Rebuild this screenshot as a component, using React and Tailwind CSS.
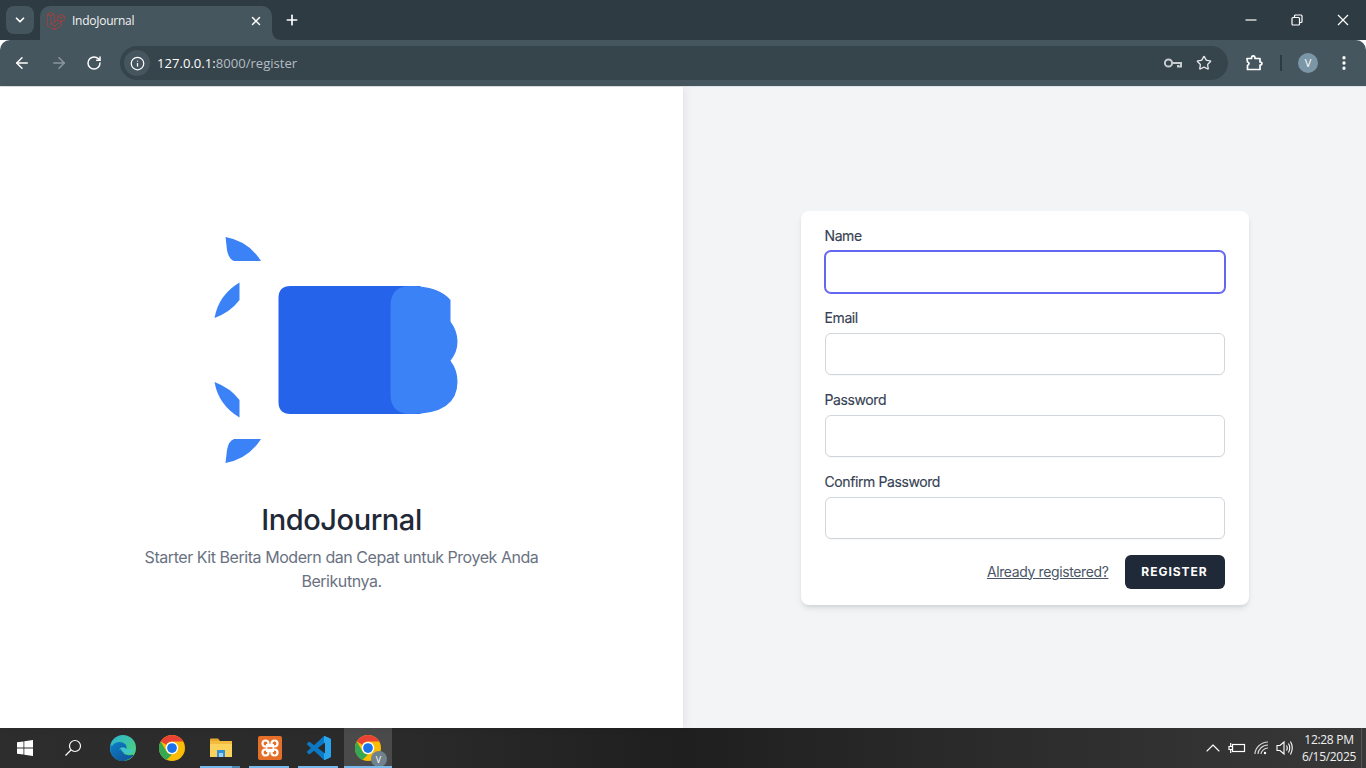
import React from "react";
import { ChevronDown, X, Plus, ArrowLeft, ArrowRight, RotateCw, Info, Star, MoreVertical, ChevronUp } from "lucide-react";
import { FaLaravel } from "react-icons/fa";

function Logo() {
  return (
    <svg width="270" height="250" viewBox="206.5 225 270 250">
      <path fill="#3b82f6" d="M225 237Q248 241 260.5 261H233.5Q228 259 226.5 250Z" />
      <path fill="#3b82f6" d="M239 282.5Q218 295 214 318Q230 312 239 300Z" />
      <path fill="#3b82f6" d="M239 417.5Q218 405 214 382Q230 388 239 400Z" />
      <path fill="#3b82f6" d="M225 463Q248 459 260.5 439H233.5Q228 441 226.5 450Z" />
      <path fill="#2563eb" d="M290 286H420V414H290Q278 414 278 402V298Q278 286 290 286Z" />
      <path fill="#3b82f6" d="M410 286Q438 286 450 300V321.5Q457 331 457 341.5Q457 352 450 360.7Q457 370 457 381.7Q457 414 410 414Q390 414 390 394V306Q390 286 410 286Z" />
    </svg>
  );
}

function Field({ label, focused }) {
  return (
    <div className="flex flex-col">
      <label className="-mt-px h-[21px] text-sm font-normal leading-5 tracking-[-0.4px] text-gray-700 [-webkit-text-stroke:0.15px_#374151]">{label}</label>
      <div
        className={
          focused
            ? "mt-1 h-[42px] rounded-md border border-[#6366f1] bg-white ring-1 ring-[#6366f1]"
            : "mt-1 h-[42px] rounded-md border border-gray-300 bg-white shadow-[0_1px_1px_rgba(0,0,0,0.03)]"
        }
      />
    </div>
  );
}

function TaskButton({ children, underline, active, split }) {
  return (
    <div className={"relative flex h-full items-center justify-center " + (active ? "w-[48px] bg-[#4a4a4a]" : "w-[49px]")}>
      {children}
      {underline && <div className={"absolute bottom-0 h-0.5 bg-[#76b9ed] " + (active ? "left-0 right-0" : "left-[3.5px] right-[5.5px]")} />}
      {split && <div className="absolute bottom-0 right-[5.5px] h-0.5 w-[8px] bg-[#4d87ad]" />}
    </div>
  );
}

function ChromeIcon({ size = 26 }) {
  return (
    <svg width={size} height={size} viewBox="0 0 48 48">
      <circle cx="24" cy="24" r="24" fill="#fbbc04" />
      <path fill="#ea4335" d="M24 0A24 24 0 0 1 44.8 12H24A12 12 0 0 0 13.6 18L3.2 12A24 24 0 0 1 24 0Z" />
      <path fill="#34a853" d="M3.2 12L13.6 30A12 12 0 0 0 24 36L13.6 46A24 24 0 0 1 3.2 12Z" />
      <circle cx="24" cy="24" r="11.5" fill="#fff" />
      <circle cx="24" cy="24" r="9" fill="#1a73e8" />
    </svg>
  );
}

const vs = "M23.15 2.587L18.21.21a1.494 1.494 0 0 0-1.705.29l-9.46 8.63-4.12-3.128a.999.999 0 0 0-1.276.057L.327 7.261A1 1 0 0 0 .326 8.74L3.899 12 .326 15.26a1 1 0 0 0 .001 1.479L1.65 17.94a.999.999 0 0 0 1.276.057l4.12-3.128 9.46 8.63a1.492 1.492 0 0 0 1.704.29l4.942-2.377A1.5 1.5 0 0 0 24 20.06V3.939a1.5 1.5 0 0 0-.85-1.352zm-5.146 14.861L10.826 12l7.178-5.448v10.896z";

export default function App() {
  return (
    <div className="flex h-screen w-full flex-col overflow-hidden bg-white font-['Inter',sans-serif]">
      {/* tab strip */}
      <div className="flex h-10 shrink-0 items-end bg-[#2f3b42]">
        <div className="mb-1.5 ml-1.5 flex h-7 w-7 items-center justify-center rounded-lg bg-[#44555e]">
          <ChevronDown size={14} strokeWidth={3} className="text-white" />
        </div>
        <div className="relative ml-1.5 flex h-[34px] w-[232px] items-center rounded-t-[10px] bg-[#46565f] pl-[7px] pr-[9px] pb-1">
          <FaLaravel size={18} className="shrink-0 text-[#c63a31]" />
          <span className="ml-[7px] flex-1 font-['Open_Sans',sans-serif] text-xs tracking-[-0.25px] text-[#f1f3f4]">IndoJournal</span>
          <X size={14} strokeWidth={2.5} className="text-white" />
          <svg className="absolute bottom-0 -right-2.5" width="10" height="10" viewBox="0 0 10 10"><path fill="#46565f" d="M0 0Q0 10 10 10H0Z" /></svg>
        </div>
        <div className="mb-[12px] ml-[12px] flex w-4 items-center justify-center">
          <Plus size={16} strokeWidth={2.5} className="text-white" />
        </div>
        <div className="flex-1" />
        <div className="mb-[13px] flex items-center gap-[32px] pr-[16px]">
          <svg width="14" height="14" viewBox="0 0 14 14" fill="none" stroke="#fff" strokeWidth="1.2"><path d="M1.5 7H12.5" /></svg>
          <svg width="14" height="14" viewBox="0 0 14 14" fill="none" stroke="#fff" strokeWidth="1.2">
            <rect x="2" y="4.5" width="7.5" height="7.5" rx="1" />
            <path d="M4.5 4.5V3a1 1 0 0 1 1-1H11a1 1 0 0 1 1 1v5.5a1 1 0 0 1-1 1H9.5" />
          </svg>
          <svg width="14" height="14" viewBox="0 0 14 14" fill="none" stroke="#fff" strokeWidth="1.2"><path d="M2 2L12 12M12 2L2 12" /></svg>
        </div>
      </div>
      {/* toolbar */}
      <div className="flex h-[46px] shrink-0 items-center rounded-t-[10px] bg-[#46565f] pr-[13px] text-white">
        <div className="flex w-[120px] items-center justify-between pl-[13px] pr-[18px]">
          <ArrowLeft size={18} strokeWidth={2} />
          <ArrowRight size={18} strokeWidth={2} className="text-[#8b979d]" />
          <RotateCw size={16} strokeWidth={2.2} />
        </div>
        <div className="flex h-[34px] flex-1 items-center rounded-full bg-[#36444c] pl-1 pr-3">
          <div className="flex h-[26px] w-[26px] items-center justify-center rounded-full bg-[#46565f]">
            <Info size={15} strokeWidth={2} />
          </div>
          <span className="ml-[7px] flex-1 pt-0.5 font-['Open_Sans',sans-serif] text-[13.1px] text-[#b4bdc2]">
            <span className="text-white">127.0.0.1:</span>8000/register
          </span>
          <svg width="20" height="14" viewBox="0 0 20 14" fill="none" stroke="#c6cccf" strokeWidth="2">
            <circle cx="5.5" cy="7" r="3.6" />
            <path d="M9.5 7h8.5v3.5h-3V9" />
          </svg>
          <Star size={16} strokeWidth={2} className="ml-[13px] mr-[4px] text-[#e3e6e8]" />
        </div>
        <svg className="ml-[17px]" width="18" height="18" viewBox="0 0 18 18" fill="none" stroke="#fff" strokeWidth="1.7">
          <path d="M2 4.5H6.5C6.5 1 10 1 10 4.5H15V8C17.5 8 17.5 11 15 11V15.5H2.5V11.5C4.5 10.5 4.5 8.5 2.5 8Z" strokeLinejoin="round" />
        </svg>
        <div className="ml-[17px] h-4 w-0.5 bg-[#2f3b42]" />
        <div className="ml-[16px] flex h-5 w-5 items-center justify-center rounded-full bg-[#7b96a6] font-['Open_Sans',sans-serif] text-[11px] text-white">V</div>
        <MoreVertical size={18} strokeWidth={2.4} className="ml-[17px]" />
      </div>
      <div className="h-px shrink-0 bg-[#dfe3e6]" />
      {/* main */}
      <div className="flex min-h-0 flex-1">
        <div className="z-10 flex w-[683px] shrink-0 flex-col items-center justify-center bg-white pt-[2px] shadow-[2px_0_8px_rgba(0,0,0,0.07)]">
          <Logo />
          <h1 className="mt-[27px] text-[29px] font-medium leading-9 tracking-[-0.42px] text-[#1f2937]">IndoJournal</h1>
          <p className="mt-[7px] text-center text-base leading-6 tracking-[-0.45px] text-gray-500">
            Starter Kit Berita Modern dan Cepat untuk Proyek Anda<br />Berikutnya.
          </p>
        </div>
        <div className="flex flex-1 items-center justify-center bg-[#f3f4f6]">
          <div className="flex w-[448px] flex-col gap-4 rounded-lg bg-white px-6 py-4 shadow-md">
            <Field label="Name" focused />
            <Field label="Email" />
            <Field label="Password" />
            <Field label="Confirm Password" />
            <div className="flex items-center justify-end">
              <span className="text-sm tracking-[-0.38px] text-gray-600 underline">Already registered?</span>
              <div className="ml-4 flex h-[34px] w-[100px] items-center justify-center rounded-md bg-[#1f2937] text-xs font-bold tracking-[0.08em] text-white">REGISTER</div>
            </div>
          </div>
        </div>
      </div>
      {/* taskbar */}
      <div className="flex h-10 shrink-0 items-center bg-[linear-gradient(90deg,#2d2d2d_0%,#2a2a2a_30%,#1f1f1f_50%,#2a2a2a_70%,#383838_100%)] font-['Open_Sans',sans-serif] text-white">
        <div className="flex h-full w-[49px] items-center justify-center">
          <svg width="16" height="16" viewBox="0 0 16 16" fill="#fff"><path d="M0 2.3L6.5 1.4V7.6H0ZM7.3 1.3L16 0V7.6H7.3ZM0 8.4H6.5V14.6L0 13.7ZM7.3 8.4H16V16L7.3 14.7Z" /></svg>
        </div>
        <div className="flex h-full w-[49.5px] items-center justify-center">
          <svg className="-ml-0.5" width="18" height="18" viewBox="0 0 18 18" fill="none" stroke="#fff" strokeWidth="1.2">
            <circle cx="11" cy="7" r="5.5" />
            <path d="M7 11L1.5 16.5" />
          </svg>
        </div>
        <TaskButton>
          <svg width="26" height="26" viewBox="0 0 26 26">
            <defs>
              <linearGradient id="edgeA" x1="0" y1="0" x2="1" y2="1"><stop offset="0" stopColor="#2bb3d8" /><stop offset="1" stopColor="#52d66a" /></linearGradient>
              <linearGradient id="edgeB" x1="0" y1="0" x2="1" y2="1"><stop offset="0" stopColor="#0c7fc6" /><stop offset="1" stopColor="#124f95" /></linearGradient>
            </defs>
            <circle cx="13" cy="13" r="13" fill="url(#edgeA)" />
            <path fill="url(#edgeB)" d="M1 9C3 16 8 25 17 25.5C12 26.8 4 26 1 18C0 15 0 12 1 9Z" />
            <path fill="url(#edgeB)" d="M1 14C2 7 11 5 15 9C18 12 16 15 14 16C12 18 15 21 21 20C24 19.5 24 20.5 22 22C18 26 11 26.5 6 22C2 19 1 16 1 14Z" />
            <path fill="#3fc5cb" d="M9 15C11 11 16 12 16 14.5H23C24 17 20 19 17 18.5C13 18 11 16 11 14Z" />
          </svg>
        </TaskButton>
        <TaskButton><ChromeIcon /></TaskButton>
        <TaskButton underline split>
          <svg width="22" height="20" viewBox="0 0 22 20">
            <path fill="#e9a92c" d="M0 1.5A1 1 0 0 1 1 .5H8L10 3H0Z" />
            <rect y="3" width="22" height="16" fill="#fbd35c" />
            <rect y="3" width="22" height="3" fill="#f3bc3e" />
            <path fill="#2f8fd8" d="M7 12H15V19H13V15H9V19H7Z" />
            <rect x="9" y="15" width="4" height="4" fill="#9fd2f2" />
          </svg>
        </TaskButton>
        <TaskButton underline>
          <svg width="24" height="24" viewBox="0 0 24 24" fill="none">
            <rect width="24" height="24" rx="2" fill="#e56f28" />
            <g stroke="#fff" strokeWidth="2.2">
              <circle cx="7.5" cy="7.5" r="3" />
              <circle cx="16.5" cy="7.5" r="3" />
              <circle cx="7.5" cy="16.5" r="3" />
              <circle cx="16.5" cy="16.5" r="3" />
            </g>
            <rect x="8" y="8" width="8" height="8" fill="#fff" />
            <rect x="9.5" y="11.2" width="5" height="1.6" fill="#e56f28" />
          </svg>
        </TaskButton>
        <TaskButton underline>
          <svg width="24" height="24" viewBox="0 0 24 24">
            <defs><clipPath id="vsR"><rect x="17" y="0" width="7" height="24" /></clipPath></defs>
            <path fill="#0d78c4" d={vs} />
            <path fill="#2ba4ee" d={vs} clipPath="url(#vsR)" />
          </svg>
        </TaskButton>
        <TaskButton underline active>
          <div className="relative h-[26px] w-[26px]">
            <ChromeIcon />
            <div className="absolute -bottom-1.5 -right-1.5 flex h-4 w-4 items-center justify-center rounded-full bg-[#70828c] text-[9px] leading-none text-white">V</div>
          </div>
        </TaskButton>
        <div className="flex-1" />
        <ChevronUp size={24} strokeWidth={1.1} />
        <svg className="ml-[3px]" width="18" height="14" viewBox="0 0 18 14" fill="none" stroke="#fff" strokeWidth="1.2">
          <rect x="4.5" y="3.5" width="12" height="7" />
          <path d="M1 5.5H4.5V8.5H1ZM2.7 2V5.5M2.7 8.5V12" />
        </svg>
        <svg className="ml-[8px]" width="16" height="14" viewBox="0 0 16 14" fill="none" stroke="#d8d8d8" strokeWidth="1.1">
          <path d="M1 13C1 7 7 1 14 1M4 13C4 9 8 4 14 4M7 13C7 10.5 10 7 14 7" />
          <circle cx="11" cy="12" r="1.2" fill="#fff" stroke="none" />
        </svg>
        <svg className="ml-[6px]" width="18" height="16" viewBox="0 0 18 16" fill="none" stroke="#fff" strokeWidth="1.1">
          <path d="M1 5.5H4L8 2V14L4 10.5H1Z" />
          <path d="M10.5 5.5Q12 8 10.5 10.5M12.5 3.5Q15 8 12.5 12.5M14.5 1.5Q18 8 14.5 14.5" />
        </svg>
        <div className="ml-[3px] flex w-[64px] flex-col items-center text-xs leading-[17px] tracking-[-0.3px] text-[#f0f0f0]">
          <span>12:28 PM</span>
          <span>6/15/2025</span>
        </div>
        <div className="h-full w-[5px] border-l border-[#555]" />
      </div>
    </div>
  );
}
